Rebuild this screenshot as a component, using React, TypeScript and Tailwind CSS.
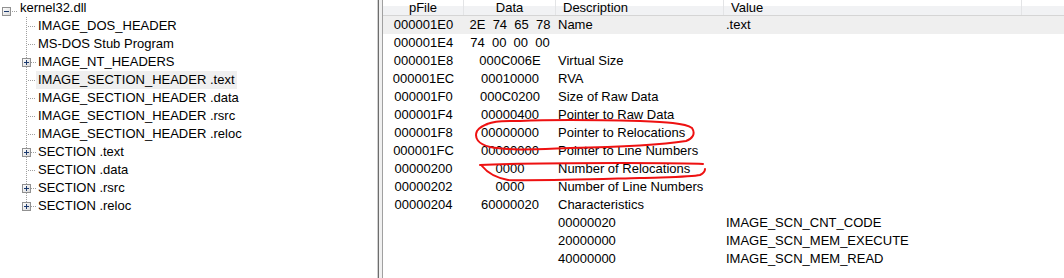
import React from 'react';

type Node = { label: string; expandable?: boolean; selected?: boolean };

const children: Node[] = [
  { label: 'IMAGE_DOS_HEADER' },
  { label: 'MS-DOS Stub Program' },
  { label: 'IMAGE_NT_HEADERS', expandable: true },
  { label: 'IMAGE_SECTION_HEADER .text', selected: true },
  { label: 'IMAGE_SECTION_HEADER .data' },
  { label: 'IMAGE_SECTION_HEADER .rsrc' },
  { label: 'IMAGE_SECTION_HEADER .reloc' },
  { label: 'SECTION .text', expandable: true },
  { label: 'SECTION .data' },
  { label: 'SECTION .rsrc', expandable: true },
  { label: 'SECTION .reloc', expandable: true },
];

type Row = { pfile: string; data: string; desc: string; value?: string; selected?: boolean };

const rows: Row[] = [
  { pfile: '000001E0', data: '2E  74  65  78', desc: 'Name', value: '.text', selected: true },
  { pfile: '000001E4', data: '74  00  00  00', desc: '' },
  { pfile: '000001E8', data: '000C006E', desc: 'Virtual Size' },
  { pfile: '000001EC', data: '00010000', desc: 'RVA' },
  { pfile: '000001F0', data: '000C0200', desc: 'Size of Raw Data' },
  { pfile: '000001F4', data: '00000400', desc: 'Pointer to Raw Data' },
  { pfile: '000001F8', data: '00000000', desc: 'Pointer to Relocations' },
  { pfile: '000001FC', data: '00000000', desc: 'Pointer to Line Numbers' },
  { pfile: '00000200', data: '0000', desc: 'Number of Relocations' },
  { pfile: '00000202', data: '0000', desc: 'Number of Line Numbers' },
  { pfile: '00000204', data: '60000020', desc: 'Characteristics' },
  { pfile: '', data: '', desc: '00000020', value: 'IMAGE_SCN_CNT_CODE' },
  { pfile: '', data: '', desc: '20000000', value: 'IMAGE_SCN_MEM_EXECUTE' },
  { pfile: '', data: '', desc: '40000000', value: 'IMAGE_SCN_MEM_READ' },
];

function ExpandBox({ x, y, open }: { x: number; y: number; open: boolean }) {
  return (
    <g>
      <defs>
        <linearGradient id="boxg" x1="0" y1="0" x2="1" y2="1">
          <stop offset="0" stopColor="#ffffff" />
          <stop offset="1" stopColor="#d8d8d8" />
        </linearGradient>
      </defs>
      <rect x={x + 0.5} y={y + 0.5} width={8} height={8} fill="url(#boxg)" stroke="#919191" />
      <line x1={x + 2} y1={y + 4.5} x2={x + 7} y2={y + 4.5} stroke="#1c3a6e" />
      {!open && <line x1={x + 4.5} y1={y + 2} x2={x + 4.5} y2={y + 7} stroke="#1c3a6e" />}
    </g>
  );
}

function ChildConnector({ last, expandable }: { last: boolean; expandable?: boolean }) {
  return (
    <svg width="36" height="18" className="shrink-0">
      {expandable ? (
        <>
          <line x1="26.5" y1="0" x2="26.5" y2="5" stroke="#a0a0a0" strokeDasharray="1 1" />
          {!last && <line x1="26.5" y1="14" x2="26.5" y2="18" stroke="#a0a0a0" strokeDasharray="1 1" />}
          <line x1="31" y1="9.5" x2="36" y2="9.5" stroke="#a0a0a0" strokeDasharray="1 1" />
          <ExpandBox x={22} y={5} open={false} />
        </>
      ) : (
        <>
          <line x1="26.5" y1="0" x2="26.5" y2={last ? 10 : 18} stroke="#a0a0a0" strokeDasharray="1 1" />
          <line x1="28" y1="9.5" x2="36" y2="9.5" stroke="#a0a0a0" strokeDasharray="1 1" />
        </>
      )}
    </svg>
  );
}

function Tree() {
  return (
    <div className="-mt-px">
      <div className="flex h-[18px] items-center">
        <svg width="18" height="18" className="shrink-0">
          <ExpandBox x={2} y={8} open />
          <line x1="12" y1="12.5" x2="18" y2="12.5" stroke="#a0a0a0" strokeDasharray="1 1" />
          <line x1="26.5" y1="18" x2="26.5" y2="18" stroke="#a0a0a0" />
        </svg>
        <span className="px-[2px] leading-[18px]">kernel32.dll</span>
      </div>
      {children.map((n, i) => (
        <div key={n.label} className="flex h-[18px]">
          <ChildConnector last={i === children.length - 1} expandable={n.expandable} />
          <span className={`px-[2px] leading-[18px] whitespace-pre ${n.selected ? 'bg-[#efefef]' : ''}`}>
            {n.label}
          </span>
        </div>
      ))}
    </div>
  );
}

function HeaderCell({ w, children, center }: { w: string; children?: React.ReactNode; center?: boolean }) {
  return (
    <div className={`${w} shrink-0 h-full border-r border-[#e3e4e6] ${center ? 'text-center' : 'pl-[7px]'}`}>
      {children}
    </div>
  );
}

function ListView() {
  return (
    <div className="flex-1 min-w-0">
      <div className="flex h-[16px] leading-[15px] border-b border-[#d5d5d5] bg-[linear-gradient(to_bottom,#ffffff_0,#ffffff_6px,#f1f2f4_6px,#f1f2f4_100%)]">
        <HeaderCell w="w-[81px]" center>pFile</HeaderCell>
        <HeaderCell w="w-[92px]" center>Data</HeaderCell>
        <HeaderCell w="w-[168px]">Description</HeaderCell>
        <HeaderCell w="w-[298px]">Value</HeaderCell>
      </div>
      {rows.map((r, i) => (
        <div key={i} className={`flex h-[18px] leading-[18px] whitespace-pre ${r.selected ? 'bg-[#efefef]' : ''}`}>
          <div className="w-[81px] shrink-0 text-center">{r.pfile}</div>
          <div className="w-[92px] shrink-0 text-center">{r.data}</div>
          <div className="w-[168px] shrink-0 pl-[2px]">{r.desc}</div>
          <div className="w-[298px] shrink-0 pl-[2px]">{r.value}</div>
        </div>
      ))}
    </div>
  );
}

function Annotations() {
  return (
    <svg width="1064" height="278" className="absolute left-0 top-0 pointer-events-none">
      <path
        d="M480 128 C490 120 505 121 520 121 C560 119 600 120 640 121 C665 122 685 123 692 128 C696 134 692 139 686 141 C660 145 620 147 570 148 C540 149 510 151 490 147 C478 144 474 138 477 131 C480 127 484 125 488 124"
        fill="none"
        stroke="#ee1111"
        strokeWidth="2"
        strokeLinecap="round"
      />
      <path
        d="M480 165 C520 163 580 163 620 163 C660 163 690 163 703 164"
        fill="none"
        stroke="#ee1111"
        strokeWidth="2"
        strokeLinecap="round"
      />
      <path
        d="M482 166 C486 171 492 177 508 180 C540 181 600 179 640 178 C670 177 692 177 700 175 C704 173 705 171 705 169"
        fill="none"
        stroke="#ee1111"
        strokeWidth="2"
        strokeLinecap="round"
      />
    </svg>
  );
}

export default function App() {
  return (
    <div
      className="relative flex w-[1064px] h-[278px] overflow-hidden bg-white text-black text-[13px]"
      style={{ fontFamily: '"Liberation Sans", Arial, sans-serif' }}
    >
      <div className="w-[378px] shrink-0 border-r border-[#d0d0d0]">
        <Tree />
      </div>
      <div className="w-[5px] shrink-0 bg-[#f0f0f0] border-l border-r border-l-[#6d6d6d] border-r-[#a0a0a0]" />
      <ListView />
      <Annotations />
    </div>
  );
}
